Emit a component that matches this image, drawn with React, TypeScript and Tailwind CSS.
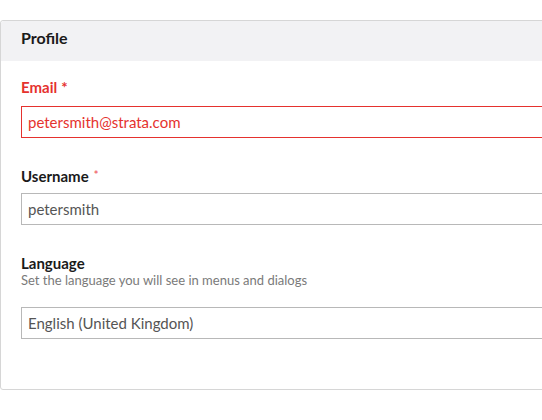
import React from 'react';

const FONT = "font-['Lato','Liberation_Sans',sans-serif]";

function Field({
  label,
  required,
  error,
  description,
  value,
  first,
}: {
  label: string;
  required?: boolean;
  error?: boolean;
  description?: string;
  value: string;
  first?: boolean;
}) {
  return (
    <div className={first ? '' : 'mt-[28px]'}>
      <div
        className={`text-[15px] font-bold leading-5 ${error ? 'text-[#e5322e]' : 'text-[#1a1a1a]'}`}
      >
        {label}
        {required &&
          (error ? (
            <span className="ml-[4px]">*</span>
          ) : (
            <span className="ml-[5px] relative -top-[3px] text-[11px] leading-none text-[#f06a6f]">*</span>
          ))}
      </div>
      {description && (
        <div className="mt-[1px] text-[13px] leading-[12px] text-[#7a7a7a]">{description}</div>
      )}
      <div
        className={`${description ? 'mt-[21px]' : error ? 'mt-[9px]' : 'mt-[7px]'} h-[32px] flex items-center pl-[6px] border text-[15px] ${
          error ? 'border-[#e5322e] text-[#e5322e]' : 'border-[#b8b8b8] text-[#555555]'
        }`}
      >
        {value}
      </div>
    </div>
  );
}

export default function App() {
  return (
    <div className={`w-[542px] h-[420px] overflow-hidden bg-white ${FONT}`}>
      <div className="mt-[20px] w-[600px] border border-[#d6d6d6] rounded-[3px] bg-white">
        <div className="h-[40px] flex items-center px-5 pb-[6px] bg-[#f2f2f4] rounded-t-[3px]">
          <h2 className="text-[16px] font-bold text-[#1a1a1a]">Profile</h2>
        </div>
        <div className="px-5 pt-4 pb-[50px]">
          <Field first label="Email" required error value="petersmith@strata.com" />
          <Field label="Username" required value="petersmith" />
          <Field
            label="Language"
            description="Set the language you will see in menus and dialogs"
            value="English (United Kingdom)"
          />
        </div>
      </div>
    </div>
  );
}
